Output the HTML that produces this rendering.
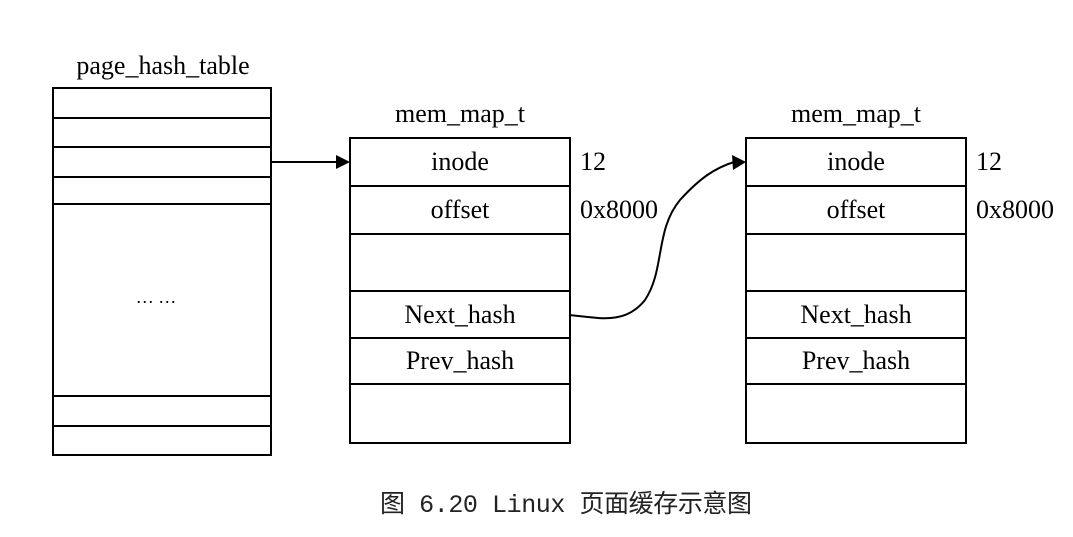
<!DOCTYPE html>
<html><head><meta charset="utf-8"><style>
body{margin:0;background:#fff}
</style></head><body>
<svg width="1073" height="532" xmlns="http://www.w3.org/2000/svg" font-family="'Liberation Serif',serif" font-size="26" fill="#000">
<g stroke="#000" stroke-width="2" fill="none">
<rect x="53" y="88" width="218" height="367"/>
<line x1="53" y1="118" x2="271" y2="118"/><line x1="53" y1="147" x2="271" y2="147"/>
<line x1="53" y1="177" x2="271" y2="177"/><line x1="53" y1="204" x2="271" y2="204"/>
<line x1="53" y1="396" x2="271" y2="396"/><line x1="53" y1="426" x2="271" y2="426"/>
<rect x="350" y="138" width="220" height="305"/>
<line x1="350" y1="186" x2="570" y2="186"/><line x1="350" y1="234" x2="570" y2="234"/>
<line x1="350" y1="291" x2="570" y2="291"/><line x1="350" y1="338" x2="570" y2="338"/>
<line x1="350" y1="384" x2="570" y2="384"/>
<rect x="746" y="138" width="220" height="305"/>
<line x1="746" y1="186" x2="966" y2="186"/><line x1="746" y1="234" x2="966" y2="234"/>
<line x1="746" y1="291" x2="966" y2="291"/><line x1="746" y1="338" x2="966" y2="338"/>
<line x1="746" y1="384" x2="966" y2="384"/>
<line x1="271" y1="162" x2="338" y2="162"/>
<path d="M569 315 C600 318 625 325 645 300 C665 270 655 230 680 200 C700 178 715 168 734 162"/>
</g>
<polygon points="336,155 350,162 336,169"/>
<polygon points="732,155 746,162 733,170"/>
<g text-anchor="middle">
<text x="163" y="74">page_hash_table</text>
<text x="460" y="122">mem_map_t</text>
<text x="856" y="122">mem_map_t</text>
<text x="460" y="170">inode</text><text x="460" y="218">offset</text>
<text x="460" y="323">Next_hash</text><text x="460" y="369">Prev_hash</text>
<text x="856" y="170">inode</text><text x="856" y="218">offset</text>
<text x="856" y="323">Next_hash</text><text x="856" y="369">Prev_hash</text>
<text x="156" y="303" font-size="18">… …</text>
</g>
<text x="580" y="170">12</text><text x="580" y="218">0x8000</text>
<text x="976" y="170">12</text><text x="976" y="218">0x8000</text>
<text x="380" y="512" font-size="25" textLength="372" lengthAdjust="spacing" font-family="'Liberation Mono','Noto Sans CJK SC',monospace" fill="#222">图 6.20  Linux 页面缓存示意图</text>
</svg>
</body></html>
